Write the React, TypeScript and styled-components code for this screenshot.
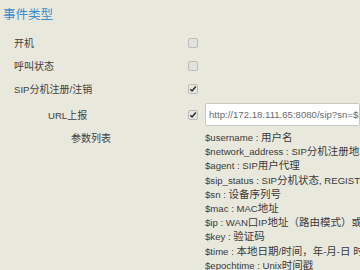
import styled, { createGlobalStyle } from 'styled-components';

const GlobalStyle = createGlobalStyle`
  html, body {
    margin: 0;
    padding: 0;
    background: #e9e8dd;
    overflow: hidden;
  }
  body {
    font-family: "Liberation Sans", Arial, "Noto Sans CJK SC", sans-serif;
    color: #3a3a3a;
  }
`;

const Page = styled.div`
  width: 360px;
  height: 270px;
  overflow: hidden;
  background: #e9e8dd;
`;

const Title = styled.div`
  padding: 4px 0 0 3px;
  height: 31px;
  box-sizing: border-box;
  font-size: 12.5px;
  color: #3b8dcb;
`;

const Row = styled.div<{ $h?: number }>`
  display: flex;
  align-items: center;
  height: ${p => p.$h ?? 23}px;
  font-size: 9.6px;
`;

const Label = styled.div<{ $indent: number }>`
  width: 188px;
  flex-shrink: 0;
  box-sizing: border-box;
  padding-left: ${p => p.$indent}px;
  white-space: nowrap;
  color: #404040;
`;

// CJK runs are drawn a little larger than the Latin text around them
const Han = styled.span<{ $size: number }>`
  font-size: ${p => p.$size}px;
`;

const Box = styled.span<{ $on?: boolean }>`
  width: 10px;
  height: 10px;
  box-sizing: border-box;
  border: 1px solid #bcbcb6;
  border-radius: 2px;
  background: ${p => (p.$on ? '#e6e6e2' : '#e2e2de')};
  display: inline-flex;
  align-items: center;
  justify-content: center;
  flex-shrink: 0;
`;

const UrlInput = styled.div`
  margin-left: 7px;
  width: 240px;
  height: 23px;
  box-sizing: border-box;
  border: 1px solid #c9c9c4;
  border-radius: 2px;
  background: #fff;
  color: #6a6a6a;
  padding: 0 3px;
  display: flex;
  align-items: center;
  white-space: nowrap;
  overflow: hidden;
`;

const ParamRow = styled.div`
  display: flex;
  align-items: flex-start;
  padding-top: 1px;
  font-size: 9.6px;
`;

const ParamList = styled.div`
  padding-left: 17px;
  white-space: nowrap;
`;

const ParamLine = styled.div`
  height: 14.2px;
  line-height: 14.2px;
`;

const mix = (text: string, size: number) =>
  text
    .split(/([\u3000-\u303f\u4e00-\u9fff\uff00-\uffef]+)/)
    .filter(Boolean)
    .map((part, i) =>
      /[\u3000-\u303f\u4e00-\u9fff\uff00-\uffef]/.test(part) ? (
        <Han key={i} $size={size}>
          {part}
        </Han>
      ) : (
        part
      )
    );

const Check = ({ on }: { on?: boolean }) => (
  <Box $on={on}>
    {on && (
      <svg width="8" height="8" viewBox="0 0 8 8">
        <path d="M1.3 4.2 L3.1 6 L6.8 1.6" fill="none" stroke="#2b2b2b" strokeWidth="1.5" />
      </svg>
    )}
  </Box>
);

const params = [
  '$username : 用户名',
  '$network_address : SIP分机注册地址',
  '$agent : SIP用户代理',
  '$sip_status : SIP分机状态, REGISTERED',
  '$sn : 设备序列号',
  '$mac : MAC地址',
  '$ip : WAN口IP地址（路由模式）或',
  '$key : 验证码',
  '$time : 本地日期/时间，年-月-日 时:分:秒',
  '$epochtime : Unix时间戳',
];

export default function App() {
  return (
    <Page>
      <GlobalStyle />
      <Title>事件类型</Title>
      <Row>
        <Label $indent={14}>{mix('开机', 10)}</Label>
        <Check />
      </Row>
      <Row>
        <Label $indent={14}>{mix('呼叫状态', 10)}</Label>
        <Check />
      </Row>
      <Row>
        <Label $indent={14}>{mix('SIP分机注册/注销', 10)}</Label>
        <Check on />
      </Row>
      <Row $h={29}>
        <Label $indent={48}>{mix('URL上报', 10)}</Label>
        <Check on />
        <UrlInput>http://172.18.111.65:8080/sip?sn=$sn</UrlInput>
      </Row>
      <ParamRow>
        <Label $indent={71}>{mix('参数列表', 10)}</Label>
        <ParamList>
          {params.map(p => (
            <ParamLine key={p}>{mix(p, 10.5)}</ParamLine>
          ))}
        </ParamList>
      </ParamRow>
    </Page>
  );
}
